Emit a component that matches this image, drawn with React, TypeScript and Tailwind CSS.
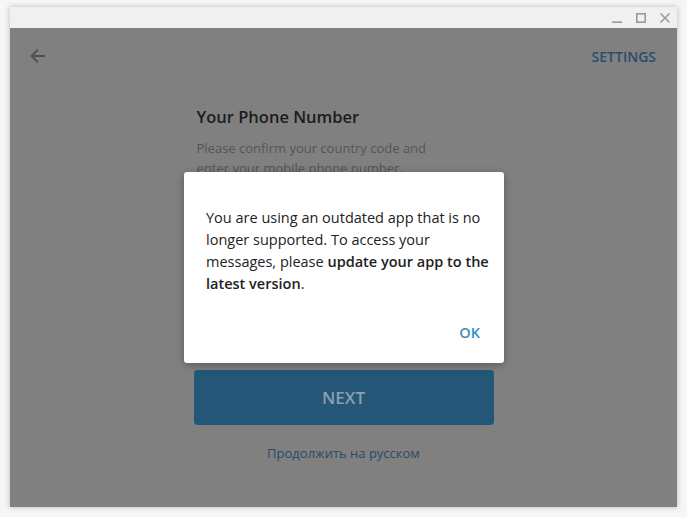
import React from "react";

const font = { fontFamily: '"Open Sans", "Noto Sans", sans-serif' };

const WindowControls: React.FC = () => (
  <div className="flex items-center gap-[14px] pr-[7px] text-[#9a9a9a]">
    <svg width="10" height="10" viewBox="0 0 10 10">
      <path d="M0 9.2h10" stroke="currentColor" strokeWidth="1.6" />
    </svg>
    <svg width="10" height="10" viewBox="0 0 10 10">
      <rect x="0.8" y="0.8" width="8.4" height="8.4" fill="none" stroke="currentColor" strokeWidth="1.6" />
    </svg>
    <svg width="10" height="10" viewBox="0 0 10 10">
      <path d="M0.5 0.5l9 9M9.5 0.5l-9 9" stroke="currentColor" strokeWidth="1.5" />
    </svg>
  </div>
);

const App: React.FC = () => {
  return (
    <div
      className="w-[687px] h-[517px] bg-[#f6f6f6] pt-[7px] pl-[10px] pr-[10px] pb-[10px] flex"
      style={font}
    >
      <div className="flex-1 flex flex-col shadow-[0_0_6px_rgba(0,0,0,0.25)]">
        <div className="h-[21px] bg-[#f0f0f0] flex items-center justify-end">
          <WindowControls />
        </div>

        <div className="relative flex-1 bg-[#808080] flex flex-col">
          <div className="h-[56px] flex items-center justify-between pl-[18px] pr-[21px]">
            <svg width="20" height="20" viewBox="0 0 20 20" className="text-[#4f4f4f]">
              <path
                d="M17 10H4M10 3.5L3.5 10 10 16.5"
                fill="none"
                stroke="currentColor"
                strokeWidth="1.8"
              />
            </svg>
            <span className="text-[14px] font-semibold text-[#2a4d6b]">SETTINGS</span>
          </div>

          <div className="w-[300px] mx-auto flex flex-col">
            <div className="mt-[22px] pl-[3px] text-[16.5px] leading-[22px] font-semibold text-[#1c1c1c]">
              Your Phone Number
            </div>
            <div className="mt-[10px] pl-[3px] text-[13px] leading-[20px] text-[#555] w-[250px]">
              Please confirm your country code and enter your mobile phone number.
            </div>

            <div className="h-[192px]" />

            <button className="h-[55px] rounded-[4px] bg-[#235677] text-[17px] font-semibold text-[#8c9fae]">
              NEXT
            </button>

            <div className="mt-[19px] text-center text-[13px] leading-[18px] text-[#2b4a66]">
              Продолжить на русском
            </div>
          </div>

          <div className="absolute left-[174px] top-[144px] w-[320px] h-[191px] bg-white rounded-[3px] shadow-[0_2px_8px_rgba(0,0,0,0.3)] flex flex-col">
            <p className="pt-[35px] pl-[22px] pr-[10px] text-[14.5px] leading-[22px] text-[#222]">
              You are using an outdated app that is no longer supported. To access your messages,
              please <span className="font-semibold">update your app to the latest version</span>.
            </p>
            <div className="mt-auto mb-[20px] flex justify-end pr-[24px]">
              <span className="text-[14.5px] leading-[20px] font-semibold text-[#3a8dc0]">OK</span>
            </div>
          </div>
        </div>
      </div>
    </div>
  );
};

export default App;
